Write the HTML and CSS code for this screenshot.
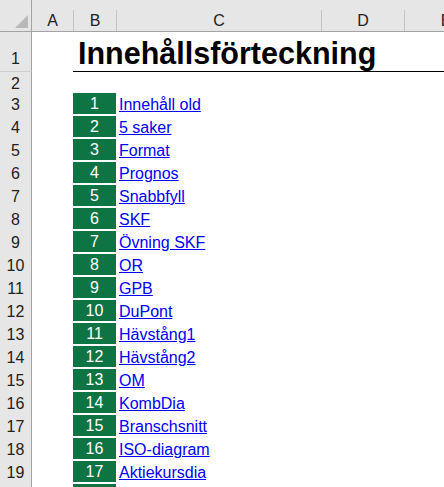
FILE: index.html
```html
<!DOCTYPE html>
<html lang="sv">
<head>
<meta charset="utf-8">
<title>Innehållsförteckning</title>
<link rel="stylesheet" href="styles.css">
</head>
<body>
<div class="sheet">
  <div class="row head">
    <div class="corner"><svg class="tri" width="13" height="13" viewBox="0 0 13 13"><polygon points="13,0 13,13 0,13" fill="#b9b9b9"/></svg></div>
    <div class="colh first">A</div>
    <div class="colh">B</div>
    <div class="colh">C</div>
    <div class="colh">D</div>
    <div class="colh">E</div>
  </div>
  <div class="row r1">
    <div class="rh">1</div>
    <div class="cell"></div>
    <div class="cell ul title-cell"><span class="title">Innehållsförteckning</span></div>
    <div class="cell ul"></div>
    <div class="cell ul"></div>
    <div class="cell ul"></div>
  </div>
  <div class="row r2">
    <div class="rh">2</div>
    <div class="cell"></div><div class="cell"></div><div class="cell"></div><div class="cell"></div><div class="cell"></div>
  </div>
  <div class="row item"><div class="rh">3</div><div class="cell"></div><div class="num">1</div><div class="link"><a href="#">Innehåll old</a></div><div class="cell"></div><div class="cell"></div></div>
  <div class="row item"><div class="rh">4</div><div class="cell"></div><div class="num">2</div><div class="link"><a href="#">5 saker</a></div><div class="cell"></div><div class="cell"></div></div>
  <div class="row item"><div class="rh">5</div><div class="cell"></div><div class="num">3</div><div class="link"><a href="#">Format</a></div><div class="cell"></div><div class="cell"></div></div>
  <div class="row item"><div class="rh">6</div><div class="cell"></div><div class="num">4</div><div class="link"><a href="#">Prognos</a></div><div class="cell"></div><div class="cell"></div></div>
  <div class="row item"><div class="rh">7</div><div class="cell"></div><div class="num">5</div><div class="link"><a href="#">Snabbfyll</a></div><div class="cell"></div><div class="cell"></div></div>
  <div class="row item"><div class="rh">8</div><div class="cell"></div><div class="num">6</div><div class="link"><a href="#">SKF</a></div><div class="cell"></div><div class="cell"></div></div>
  <div class="row item"><div class="rh">9</div><div class="cell"></div><div class="num">7</div><div class="link"><a href="#">Övning SKF</a></div><div class="cell"></div><div class="cell"></div></div>
  <div class="row item"><div class="rh">10</div><div class="cell"></div><div class="num">8</div><div class="link"><a href="#">OR</a></div><div class="cell"></div><div class="cell"></div></div>
  <div class="row item"><div class="rh">11</div><div class="cell"></div><div class="num">9</div><div class="link"><a href="#">GPB</a></div><div class="cell"></div><div class="cell"></div></div>
  <div class="row item"><div class="rh">12</div><div class="cell"></div><div class="num">10</div><div class="link"><a href="#">DuPont</a></div><div class="cell"></div><div class="cell"></div></div>
  <div class="row item"><div class="rh">13</div><div class="cell"></div><div class="num">11</div><div class="link"><a href="#">Hävstång1</a></div><div class="cell"></div><div class="cell"></div></div>
  <div class="row item"><div class="rh">14</div><div class="cell"></div><div class="num">12</div><div class="link"><a href="#">Hävstång2</a></div><div class="cell"></div><div class="cell"></div></div>
  <div class="row item"><div class="rh">15</div><div class="cell"></div><div class="num">13</div><div class="link"><a href="#">OM</a></div><div class="cell"></div><div class="cell"></div></div>
  <div class="row item"><div class="rh">16</div><div class="cell"></div><div class="num">14</div><div class="link"><a href="#">KombDia</a></div><div class="cell"></div><div class="cell"></div></div>
  <div class="row item"><div class="rh">17</div><div class="cell"></div><div class="num">15</div><div class="link"><a href="#">Branschsnitt</a></div><div class="cell"></div><div class="cell"></div></div>
  <div class="row item"><div class="rh">18</div><div class="cell"></div><div class="num">16</div><div class="link"><a href="#">ISO-diagram</a></div><div class="cell"></div><div class="cell"></div></div>
  <div class="row item"><div class="rh">19</div><div class="cell"></div><div class="num">17</div><div class="link"><a href="#">Aktiekursdia</a></div><div class="cell"></div><div class="cell"></div></div>
  <div class="row item"><div class="rh"></div><div class="cell"></div><div class="num"></div><div class="link"></div><div class="cell"></div><div class="cell"></div></div>
</div>
</body>
</html>
```
FILE: styles.css
```css
* { box-sizing: border-box; }
html, body { margin: 0; padding: 0; background: #fff; }
body { width: 444px; height: 487px; overflow: hidden; }

.sheet {
  width: 444px;
  height: 487px;
  overflow: hidden;
  font-family: "Liberation Sans", Arial, sans-serif;
  font-size: 16px;
  color: #222;
}

.row {
  display: grid;
  grid-template-columns: 32px 41px 43px 205px 83px 83px;
}

/* column header row */
.head {
  height: 32px;
  background: #e6e6e6;
  border-bottom: 1px solid #a3a3a3;
}
.corner {
  border-right: 1px solid #a3a3a3;
  display: flex;
  justify-content: flex-end;
  align-items: flex-end;
  padding: 0 3px 3px 0;
}
.tri { display: block; }
.colh {
  margin-top: 10px;
  line-height: 21px;
  text-align: center;
  border-left: 1px solid #c4c4c4;
}
.colh.first { border-left: none; }

/* row headers */
.rh {
  background: #e6e6e6;
  border-right: 1px solid #a3a3a3;
  border-bottom: 1px solid #cdcdcd;
  display: flex;
  justify-content: center;
  align-items: flex-end;
  line-height: 18px;
}

.r1 { height: 40px; }
.r1 .rh { padding-bottom: 3px; }
.r2 { height: 21px; }
.r2 .rh { padding-bottom: 0; margin-bottom: -1px; }
.item { height: 23px; }
.item .rh { align-items: flex-start; line-height: 22px; padding-top: 1px; }

.cell { min-width: 0; }
.ul { border-bottom: 1px solid #000; }

.title-cell { overflow: visible; white-space: nowrap; padding: 4px 0 0 5px; }
.title {
  font-weight: bold;
  font-size: 30.5px;
  line-height: 34px;
  color: #000;
}

.num {
  align-self: start;
  height: 21px;
  line-height: 22px;
  background: #0f7444;
  color: #fff;
  text-align: center;
}

.link {
  padding: 1px 0 0 3px;
  line-height: 22px;
  white-space: nowrap;
}
.link a { color: #0000ff; text-decoration: underline; }
```
